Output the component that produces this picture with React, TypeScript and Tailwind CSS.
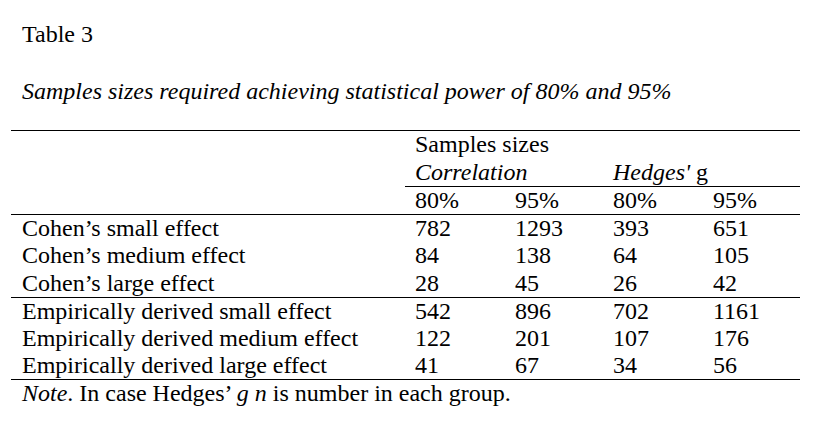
import React from "react";

const rowsA = [
  ["Cohen’s small effect", "782", "1293", "393", "651"],
  ["Cohen’s medium effect", "84", "138", "64", "105"],
  ["Cohen’s large effect", "28", "45", "26", "42"],
];
const rowsB = [
  ["Empirically derived small effect", "542", "896", "702", "1161"],
  ["Empirically derived medium effect", "122", "201", "107", "176"],
  ["Empirically derived large effect", "41", "67", "34", "56"],
];

function DataRow({ r, top, bottom }: { r: string[]; top?: boolean; bottom?: boolean }) {
  const b = `${top ? "border-t border-black" : ""} ${bottom ? "border-b border-black" : ""}`;
  return (
    <tr>
      <td className={`pl-[11px] p-0 ${b}`}>{r[0]}</td>
      {r.slice(1).map((v, i) => (
        <td key={i} className={`pl-[10px] p-0 ${b}`}>{v}</td>
      ))}
    </tr>
  );
}

export default function App() {
  return (
    <div className="w-[829px] h-[425px] bg-white text-black [font-family:'Liberation_Serif','Times_New_Roman',serif] text-[24px] leading-[27.6px] overflow-hidden">
      <div className="pt-[21px] pl-[22px]">Table 3</div>
      <div className="mt-[29.4px] pl-[22px] italic">
        Samples sizes required achieving statistical power of 80% and 95%
      </div>
      <table className="ml-[11px] mt-[24.4px] border-collapse table-fixed w-[789px] leading-[27.2px]">
        <colgroup>
          <col className="w-[394px]" />
          <col className="w-[100px]" />
          <col className="w-[98px]" />
          <col className="w-[100px]" />
          <col className="w-[97px]" />
        </colgroup>
        <tbody>
          <tr className="h-[28px]">
            <td className="p-0 border-t border-black"></td>
            <td colSpan={4} className="p-0 pl-[10px] border-t border-black">Samples sizes</td>
          </tr>
          <tr className="h-[28px]">
            <td className="p-0"></td>
            <td colSpan={2} className="p-0 pl-[10px] italic">Correlation</td>
            <td colSpan={2} className="p-0 pl-[10px]">
              <span className="italic">Hedges'</span> g
            </td>
          </tr>
          <tr>
            <td className="p-0"></td>
            <td className="p-0 pl-[10px] border-t border-black">80%</td>
            <td className="p-0 pl-[10px] border-t border-black">95%</td>
            <td className="p-0 pl-[10px] border-t border-black">80%</td>
            <td className="p-0 pl-[10px] border-t border-black">95%</td>
          </tr>
          {rowsA.map((r, i) => (
            <DataRow key={r[0]} r={r} top={i === 0} />
          ))}
          {rowsB.map((r, i) => (
            <DataRow key={r[0]} r={r} top={i === 0} bottom={i === rowsB.length - 1} />
          ))}
        </tbody>
      </table>
      <div className="pl-[22px]">
        <span className="italic">Note</span>. In case Hedges’ <span className="italic">g n</span> is number in each group.
      </div>
    </div>
  );
}
